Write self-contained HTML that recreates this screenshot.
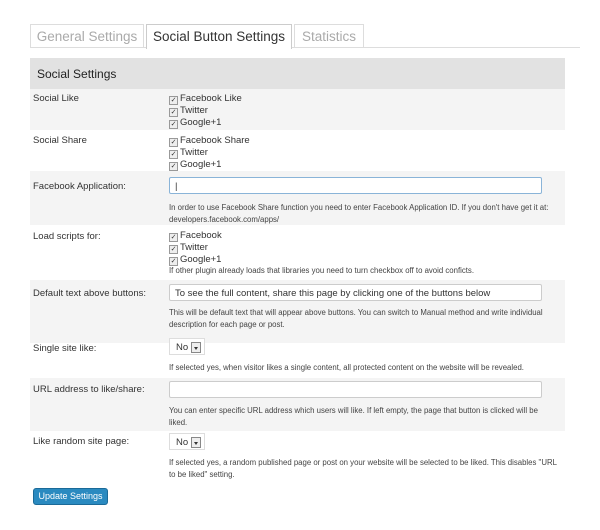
<!DOCTYPE html>
<html><head><style>
body{margin:0;width:600px;height:530px;background:#fff;font-family:"Liberation Sans",sans-serif;position:relative;overflow:hidden}
.a{position:absolute}
.tab{position:absolute;top:24px;height:22px;border:1px solid #ddd;border-bottom:none;font-size:13.5px;line-height:23px;text-align:center;color:#aaa;background:#fff}
.row{position:absolute;left:30px;width:535px}
.g{background:#f4f4f4}
.lbl{position:absolute;left:3px;font-size:9.5px;color:#333}
.cb{position:absolute;left:139px;font-size:9.5px;color:#333;line-height:11.5px}
.cb span{display:inline-block;width:7px;height:7px;border:1px solid #999;background:#eee;font-size:7px;line-height:7px;text-align:center;margin-right:2px;vertical-align:-1px;color:#333}
.inp{position:absolute;left:139px;height:17px;border:1px solid #ccc;background:#fff;border-radius:2px;font-size:9.5px;line-height:17px;color:#333;padding-left:5px;box-sizing:border-box;width:373px}
.desc{position:absolute;left:139px;white-space:nowrap;font-size:7.8px;color:#444;line-height:12px}
.sel{position:absolute;left:139px;width:36px;height:17px;border:1px solid #ddd;background:#fff;font-size:9.5px;line-height:17px;color:#333;padding-left:6px;box-sizing:border-box}
.sel i{position:absolute;right:3px;top:3px;width:8px;height:9px;border:1px solid #888;background:#eee}
.sel i:after{content:"";position:absolute;left:2px;top:4px;border:2px solid transparent;border-top:3px solid #333}
</style></head><body>
<div class="a" style="left:30px;top:47px;width:550px;height:1px;background:#ddd"></div>
<div class="tab" style="left:30px;width:112px">General Settings</div>
<div class="tab" style="left:146px;width:144px;height:24px;color:#333;border-color:#ccc">Social Button Settings</div>
<div class="tab" style="left:294px;width:68px">Statistics</div>

<div class="row" style="top:58px;height:31px;background:#e2e2e2"><div class="lbl" style="left:7px;top:9px;font-size:12px;color:#222">Social Settings</div></div>

<div class="row g" style="top:89px;height:41px"><div class="lbl" style="top:4px">Social Like</div>
<div class="cb" style="top:4px"><span>✓</span>Facebook Like<br><span>✓</span>Twitter<br><span>✓</span>Google+1</div></div>

<div class="row" style="top:130px;height:41px"><div class="lbl" style="top:5px">Social Share</div>
<div class="cb" style="top:5px"><span>✓</span>Facebook Share<br><span>✓</span>Twitter<br><span>✓</span>Google+1</div></div>

<div class="row g" style="top:171px;height:54px"><div class="lbl" style="top:10px">Facebook Application:</div>
<div class="inp" style="top:6px;border-color:#8ab4d8">|</div>
<div class="desc" style="top:31px">In order to use Facebook Share function you need to enter Facebook Application ID. If you don't have get it at:<br>developers.facebook.com/apps/</div></div>

<div class="row" style="top:225px;height:55px"><div class="lbl" style="top:6px">Load scripts for:</div>
<div class="cb" style="top:5px"><span>✓</span>Facebook<br><span>✓</span>Twitter<br><span>✓</span>Google+1</div>
<div class="desc" style="top:40px">If other plugin already loads that libraries you need to turn checkbox off to avoid conficts.</div></div>

<div class="row g" style="top:280px;height:63px"><div class="lbl" style="top:8px">Default text above buttons:</div>
<div class="inp" style="top:4px">To see the full content, share this page by clicking one of the buttons below</div>
<div class="desc" style="top:27px">This will be default text that will appear above buttons. You can switch to Manual method and write individual<br>description for each page or post.</div></div>

<div class="row" style="top:343px;height:35px"><div class="lbl" style="top:0px">Single site like:</div>
<div class="sel" style="top:-5px">No<i></i></div>
<div class="desc" style="top:19px">If selected yes, when visitor likes a single content, all protected content on the website will be revealed.</div></div>

<div class="row g" style="top:378px;height:53px"><div class="lbl" style="top:6px">URL address to like/share:</div>
<div class="inp" style="top:3px"></div>
<div class="desc" style="top:27px">You can enter specific URL address which users will like. If left empty, the page that button is clicked will be<br>liked.</div></div>

<div class="row" style="top:431px;height:50px"><div class="lbl" style="top:5px">Like random site page:</div>
<div class="sel" style="top:2px">No<i></i></div>
<div class="desc" style="top:26px">If selected yes, a random published page or post on your website will be selected to be liked. This disables "URL<br>to be liked" setting.</div></div>

<div class="a" style="left:33px;top:488px;width:75px;height:17px;background:#2a8ac0;border:1px solid #1b6a98;border-radius:3px;box-sizing:border-box;color:#fff;font-size:9px;line-height:15px;text-align:center">Update Settings</div>
</body></html>
